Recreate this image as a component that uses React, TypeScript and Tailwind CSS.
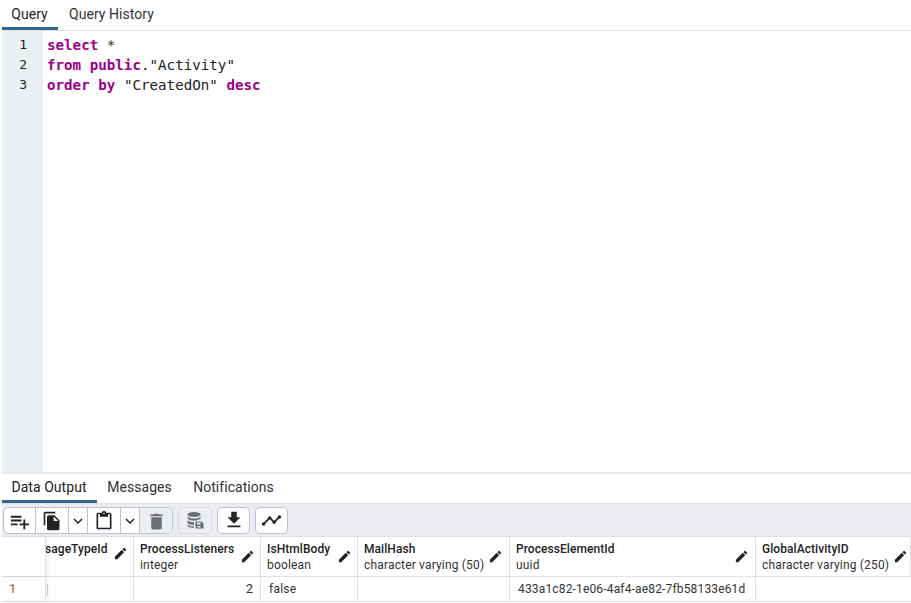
import React from "react";
import {
  MdPlaylistAdd,
  MdFileCopy,
  MdKeyboardArrowDown,
  MdContentPaste,
  MdDelete,
  MdGetApp,
  MdTimeline,
  MdEdit,
} from "react-icons/md";

const SaveData = () => (
  <svg width="18" height="18" viewBox="0 0 18 18" fill="#6b6e73">
    <ellipse cx="8" cy="3.5" rx="6.5" ry="2.6" />
    <path d="M1.5 5.3c1 1.6 3.6 2.3 6.5 2.3s5.5-.7 6.500-2.300V8c-1.200.2-3 .7-4 1.500H8c-3 0-5.500-.8-6.500-2.300z" />
    <path d="M1.500 9.300C2.700 10.600 5 11.200 8 11.200V14c-3.500 0-6.500-1-6.500-2.500z" />
    <path d="M1.500 13.300C2.700 14.600 5 15.200 8 15.200V17c-3.500 0-6.500-1-6.500-2z" opacity="0.8" />
    <path d="M9.500 10.500h6l2 2v5h-8zM11 11.500v2h3.500v-2zM11.500 15v1.500h3V15z" fillRule="evenodd" />
  </svg>
);

const Tab = ({ label, active, width }: { label: string; active?: boolean; width: string }) => (
  <div className={`${width} h-full flex items-center justify-center text-[14px] tracking-[0.05px] border-b-[3px] ${active ? "text-[#222] border-[#326690] pr-[1px]" : "text-[#333] border-transparent"}`}>
    {label}
  </div>
);

const Col = ({ name, type, width, pencilGap }: { name: string; type: string; width: string; pencilGap: string }) => (
  <div className={`${width} ${pencilGap} shrink-0 h-full border-r border-[#dde0e6] pl-[6px] flex items-center justify-between`}>
    <div className="flex flex-col whitespace-nowrap">
      <span className="text-[12px] leading-[16px] font-medium tracking-[0.06px] text-[#222]">{name}</span>
      <span className="text-[12px] leading-[16px] tracking-[0.17px] text-[#333]">{type}</span>
    </div>
    <MdEdit size={15} className="text-[#222] shrink-0" />
  </div>
);

const Btn = ({ children, className }: { children: React.ReactNode; className: string }) => (
  <div className={`h-[27px] flex items-center justify-center ${className}`}>{children}</div>
);

export default function App() {
  return (
    <div className="w-[911px] h-[603px] bg-white flex flex-col overflow-hidden font-['Roboto',sans-serif] pl-[2px]">
      {/* query tabs */}
      <div className="h-[31px] shrink-0 flex border-b border-[#dde0e6] pt-[1px]">
        <Tab label="Query" active width="w-[56px]" />
        <Tab label="Query History" width="w-[107px]" />
      </div>

      {/* editor */}
      <div className="flex-1 flex min-h-0 font-['DejaVu_Sans_Mono',monospace] text-[14.2px] leading-[20px]">
        <div className="w-[41px] bg-[#ebeef3] shrink-0 pt-[4px] pr-[16px] text-right text-[#222] text-[13px]">
          <div>1</div>
          <div>2</div>
          <div>3</div>
        </div>
        <div className="pl-[4px] pt-[4px] whitespace-pre text-[#222]">
          <div><span className="text-[#908] font-bold">select</span> <span className="text-[#333]">*</span></div>
          <div><span className="text-[#908] font-bold">from public</span>."Activity"</div>
          <div><span className="text-[#908] font-bold">order by</span> "CreatedOn" <span className="text-[#908] font-bold">desc</span></div>
        </div>
      </div>

      {/* results */}
      <div className="h-[131px] shrink-0 flex flex-col border-t-2 border-[#e8eaee]">
        <div className="h-[29px] shrink-0 flex">
          <Tab label="Data Output" active width="w-[95px]" />
          <Tab label="Messages" width="w-[85px]" />
          <Tab label="Notifications" width="w-[103px]" />
        </div>

        <div className="h-[34px] shrink-0 flex items-center gap-[5px] pl-[1px] bg-[#ebecef] border-y border-[#dde0e6]">
          <div className="flex h-[27px] rounded-[5px] border border-[#bcc3d0] overflow-hidden bg-white">
            <Btn className="w-[32px] border-r border-[#bcc3d0]"><MdPlaylistAdd size={23} className="text-[#222]" /></Btn>
            <Btn className="w-[33px] border-r border-[#bcc3d0]"><MdFileCopy size={20} className="text-[#222]" /></Btn>
            <Btn className="w-[19px] border-r border-[#bcc3d0]"><MdKeyboardArrowDown size={18} className="text-[#222]" /></Btn>
            <Btn className="w-[33px] border-r border-[#bcc3d0]"><MdContentPaste size={20} className="text-[#222]" /></Btn>
            <Btn className="w-[19px] border-r border-[#bcc3d0]"><MdKeyboardArrowDown size={18} className="text-[#222]" /></Btn>
            <Btn className="w-[32px] bg-[#eceef1]"><MdDelete size={21} className="text-[#6b6e73]" /></Btn>
          </div>
          <Btn className="w-[34px] rounded-[5px] border border-[#d5d9e0] bg-[#eceef1]"><SaveData /></Btn>
          <Btn className="w-[33px] rounded-[5px] border border-[#bcc3d0] bg-white"><MdGetApp size={22} className="text-[#222]" /></Btn>
          <Btn className="w-[33px] rounded-[5px] border border-[#bcc3d0] bg-white"><MdTimeline size={21} className="text-[#222]" /></Btn>
        </div>

        {/* grid header */}
        <div className="h-[40px] shrink-0 flex border-b border-[#dde0e6]">
          <div className="w-[44px] shrink-0 border-r border-[#dde0e6] shadow-[2px_0_4px_rgba(0,0,0,0.06)]" />
          <div className="w-[88px] shrink-0 h-full border-r border-[#dde0e6] flex items-start justify-between pt-[4px] pr-[5px] overflow-hidden">
            <span className="text-[12px] leading-[16px] font-medium tracking-[0.06px] text-[#222] whitespace-nowrap -ml-[1px]">sageTypeId</span>
            <MdEdit size={15} className="text-[#222] shrink-0 mt-[5px]" />
          </div>
          <Col name="ProcessListeners" type="integer" width="w-[127px]" pencilGap="pr-[5px]" />
          <Col name="IsHtmlBody" type="boolean" width="w-[97px]" pencilGap="pr-[5px]" />
          <Col name="MailHash" type="character varying (50)" width="w-[152px]" pencilGap="pr-[6px]" />
          <Col name="ProcessElementId" type="uuid" width="w-[246px]" pencilGap="pr-[6px]" />
          <Col name="GlobalActivityID" type="character varying (250)" width="w-[155px]" pencilGap="pr-[2px]" />
        </div>

        {/* grid row */}
        <div className="h-[25px] shrink-0 flex border-b border-[#dde0e6] text-[12px] text-[#333]">
          <div className="w-[44px] shrink-0 border-r border-[#dde0e6] pl-[7px] flex items-center text-[13px] text-[#a8602a] shadow-[2px_0_4px_rgba(0,0,0,0.06)]">1</div>
          <div className="w-[88px] shrink-0 border-r border-[#dde0e6] flex items-center">
            <span className="w-[2px] h-[11px] border-y border-r border-[#c9ccd2]" />
          </div>
          <div className="w-[127px] shrink-0 border-r border-[#dde0e6] flex items-center justify-end pr-[7px] text-[13px]">2</div>
          <div className="w-[97px] shrink-0 border-r border-[#dde0e6] flex items-center pl-[8px] tracking-[0.25px]">false</div>
          <div className="w-[152px] shrink-0 border-r border-[#dde0e6]" />
          <div className="w-[246px] shrink-0 border-r border-[#dde0e6] flex items-center pl-[8px] tracking-[0.16px]">433a1c82-1e06-4af4-ae82-7fb58133e61d</div>
          <div className="w-[155px] shrink-0" />
        </div>
      </div>
    </div>
  );
}
